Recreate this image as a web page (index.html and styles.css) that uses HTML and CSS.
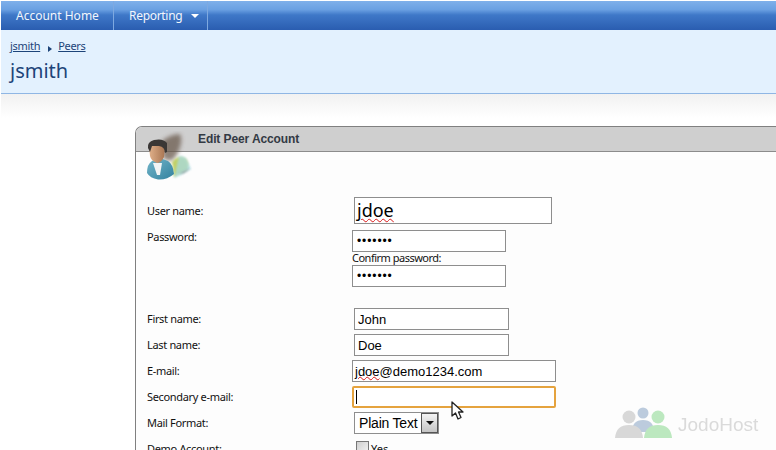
FILE: index.html
```html
<!DOCTYPE html>
<html lang="en">
<head>
<meta charset="utf-8">
<title>Edit Peer Account</title>
<link rel="stylesheet" href="styles.css">
</head>
<body>
<nav class="topnav">
  <a class="nav-item home">Account Home</a>
  <a class="nav-item reporting"><span class="tight">Reporting</span> <span class="caret"></span></a>
</nav>
<header class="subhead">
  <div class="crumbs"><a>jsmith</a><span class="sep"></span><a>Peers</a></div>
  <h1>jsmith</h1>
</header>
<div class="fade"></div>
<main class="panel">
  <div class="panel-head">Edit Peer Account</div>
  <svg class="avatar" width="52" height="52" viewBox="0 0 52 52">
    <defs>
      <linearGradient id="skin" x1="0" y1="0" x2="1" y2="0"><stop offset="0" stop-color="#e0b08a"/><stop offset="1" stop-color="#a87552"/></linearGradient>
      <linearGradient id="shirt" x1="0" y1="0" x2="1" y2="1"><stop offset="0" stop-color="#74b6ca"/><stop offset="1" stop-color="#33829f"/></linearGradient>
      <filter id="b1" x="-40%" y="-40%" width="180%" height="180%"><feGaussianBlur stdDeviation="2"/></filter>
      <filter id="b2" x="-40%" y="-40%" width="180%" height="180%"><feGaussianBlur stdDeviation="1.200"/></filter>
    </defs>
    <path d="M19 10 Q28 3 37 3 Q40 9 36 19 Q33 27 28 30 L20 28Z" fill="#6a5a4e" opacity=".75" filter="url(#b1)"/>
    <path d="M29 31 Q36 23 43 28 Q46 33 45 38 L31 46Z" fill="#b7c94f" opacity=".85" filter="url(#b2)"/>
    <path d="M36 25 Q43 24 45 31 L48 38 L38 44 L31 47Z" fill="#a6dbe7" opacity=".7" filter="url(#b2)"/>
    <path d="M36 43 L48 37 L41 42Z" fill="#666" opacity=".7" filter="url(#b2)"/>
    <path d="M4 42 Q4 33 9 30 L17 27 L25 30 Q30 33 31 43 Q24 49 15 48.500 Q7 47 4 42Z" fill="url(#shirt)"/>
    <path d="M10 32 L19 32 L17 44 L14 44Z" fill="#f2f4f4"/>
    <path d="M6 15 Q6 11 13 11 Q22 11 22 16 L21 26 Q18 32 14 32 Q8 30 7 25Z" fill="url(#skin)"/>
    <path d="M5 17 Q4 11 11 9 Q20 7 24 12 L24 21 L22 22 Q22 16 16 15 L9 15 L7 21Z" fill="#3a3735"/>
  </svg>
  <form class="form">
    <div class="row r-user">
      <label class="lbl lbl-user">User name:</label>
      <div class="field inset"><div class="box box-user"><span class="wavy">jdoe</span></div></div>
    </div>
    <div class="row r-pass">
      <label class="lbl lbl-pass">Password:</label>
      <div class="field">
        <input class="box box-pass" type="password" value="1234567">
        <div class="confirm">Confirm password:</div>
        <input class="box box-pass" type="password" value="1234567">
      </div>
    </div>
    <div class="row r-std">
      <label class="lbl">First name:</label>
      <div class="field inset"><div class="box box-name">John</div></div>
    </div>
    <div class="row r-std">
      <label class="lbl">Last name:</label>
      <div class="field inset"><div class="box box-name">Doe</div></div>
    </div>
    <div class="row r-std">
      <label class="lbl">E-mail:</label>
      <div class="field"><div class="box box-mail"><span class="wavy wavy-sm">jdoe</span>@demo1234.com</div></div>
    </div>
    <div class="row r-std">
      <label class="lbl">Secondary e-mail:</label>
      <div class="field"><div class="box box-mail focus"><span class="caretline"></span></div></div>
    </div>
    <div class="row r-std">
      <label class="lbl">Mail Format:</label>
      <div class="field inset">
        <div class="select"><span class="sel-text">Plain Text</span><span class="sel-btn"><i></i></span></div>
      </div>
    </div>
    <div class="row r-std">
      <label class="lbl">Demo Account:</label>
      <div class="field inset check"><span class="cb"></span><span class="yes">Yes</span></div>
    </div>
  </form>
</main>
<svg class="pointer" width="15" height="20" viewBox="0 0 15 20">
  <path d="M1 1 L1 15 L4.500 12 L7 18 L10 16.500 L7.500 11 L12 11Z" fill="#fff" stroke="#222" stroke-width="1.300" stroke-linejoin="round"/>
</svg>
<div class="watermark">
  <svg class="wm-icon" width="58" height="32" viewBox="0 0 58 32">
    <g fill="#bccbdd"><circle cx="28" cy="6" r="5.500"/><path d="M17 25 Q17 13 28 13 Q39 13 39 25Z"/></g>
    <g fill="#d8d8d8"><circle cx="14" cy="10" r="6.500"/><path d="M0 31 Q1 18 14 18 Q27 18 28 31Z"/></g>
    <g fill="#bce8bf"><circle cx="43" cy="10" r="6.500"/><path d="M29 31 Q30 18 43 18 Q56 18 57 31Z"/></g>
  </svg>
  <span>JodoHost</span>
</div>
</body>
</html>
```
FILE: styles.css
```css
* { box-sizing: border-box; }
html, body { margin: 0; height: 450px; overflow: hidden; background: #fff; }
body { position: relative; font-family: "Noto Sans", "Open Sans", sans-serif; color: #111; }

.topnav {
  display: flex; height: 29px; margin: 1px 0 0 1px;
  background: linear-gradient(#7fb0ea 0, #6aa0e2 30%, #3f78c8 48%, #2a5db0 100%);
}
.nav-item { display: flex; align-items: center; color: #f2f6fc; font: 12px "Noto Sans", sans-serif; border-right: 1px solid #7ea9e0; height: 29px; white-space: nowrap; }
.home { width: 113px; padding-left: 15px; }
.reporting { width: 94px; padding-left: 15px; }
.tight { letter-spacing: -.3px; }
.caret { width: 0; height: 0; margin-left: 9px; border-top: 4px solid #fff; border-left: 4px solid transparent; border-right: 4px solid transparent; }

.subhead { height: 64px; margin-left: 1px; background: #e3f1fe; border-bottom: 1px solid #8fb6e4; padding: 8px 0 0 9px; color: #1d4479; }
.crumbs { display: flex; align-items: center; height: 14px; font-size: 11px; letter-spacing: -.3px; }
.crumbs a { text-decoration: underline; }
.sep { width: 0; height: 0; margin: 8px 6px 0 8px; border-left: 4px solid #1d4479; border-top: 3.500px solid transparent; border-bottom: 3.500px solid transparent; }
h1 { margin: 6px 0 0; font-size: 20px; font-weight: 400; line-height: 26px; color: #1d4479; }

.fade { height: 24px; margin-left: 1px; background: linear-gradient(#f1f1f1, #fff); }

.panel {
  position: relative; margin: 8px 0 0 135px; height: 340px; width: 660px;
  background: #fdfdfd; border: 1px solid #808080; border-right: 0; border-bottom: 0; border-top-left-radius: 7px;
}
.panel-head { height: 25px; padding-left: 62px; background: #cfcfcf; border-bottom: 1px solid #8c8c8c; border-top-left-radius: 6px; font: 700 12px/24px "Liberation Sans", sans-serif; letter-spacing: -.1px; color: #333a44; }
.avatar { position: absolute; left: 7px; top: 4px; }

.form { padding: 45px 0 0 11px; font-size: 11px; }
.row { display: flex; }
.r-user { height: 33px; }
.r-pass { height: 78px; }
.r-std { height: 26px; }
.lbl { width: 205px; flex: none; padding-top: 3px; line-height: 15px; color: #111; letter-spacing: -.33px; }
.lbl-user { padding-top: 6px; }
.lbl-pass { padding-top: 0; line-height: 13px; }
.field.inset { padding-left: 2px; }
.box { display: block; margin: 0; background: #fff; border: 1px solid #8e8e8e; border-radius: 0; outline: 0; font-family: "Liberation Sans", sans-serif; color: #000; white-space: nowrap; }
.box-user { width: 198px; height: 27px; padding-left: 2px; font: 18px/24px "Noto Sans", sans-serif; }
.wavy { text-decoration: underline wavy #d81818 1px; text-underline-offset: 1px; }
.wavy-sm { text-underline-offset: 0; }
.box-pass { width: 154px; height: 22px; padding: 0 4px; font-size: 12px; letter-spacing: .9px; }
.box-name { width: 155px; height: 22px; padding-left: 3px; font-size: 13px; line-height: 22px; }
.box-mail { width: 204px; height: 22px; padding-left: 2px; font-size: 13px; line-height: 22px; }
.confirm { height: 13px; line-height: 12px; letter-spacing: -.5px; color: #111; }
.focus { border: 2px solid #e5a33e; border-radius: 2px; display: flex; align-items: center; padding-left: 0; }
.caretline { display: block; width: 1px; height: 14px; margin-left: 2px; background: #000; }

.select { display: flex; width: 85px; height: 22px; background: #fff; border: 1px solid #8e8e8e; align-items: stretch; }
.sel-text { flex: 1; padding-left: 4px; font: 14px/20px "Liberation Sans", sans-serif; letter-spacing: -.2px; color: #000; white-space: nowrap; }
.sel-btn { display: flex; width: 17px; flex: none; align-items: center; justify-content: center; background: linear-gradient(#f4f4f4, #c4c4c4); border: 1px solid #555; }
.sel-btn i { display: block; width: 0; height: 0; border-left: 4px solid transparent; border-right: 4px solid transparent; border-top: 4px solid #111; }

.check { display: flex; padding-top: 3px; }
.cb { display: block; width: 13px; height: 13px; margin-left: 2px; border: 1px solid #777; background: linear-gradient(135deg, #cfcfcf, #f4f4f4); }
.yes { margin-left: 2px; line-height: 15px; }

.pointer { position: absolute; left: 451px; top: 401px; }
.watermark { position: absolute; left: 615px; top: 407px; display: flex; align-items: center; gap: 5px; }
.wm-icon { filter: blur(.4px); }
.watermark span { font: 19px "Liberation Sans", sans-serif; color: #dadada; padding-top: 4px; filter: blur(.3px); }
```
